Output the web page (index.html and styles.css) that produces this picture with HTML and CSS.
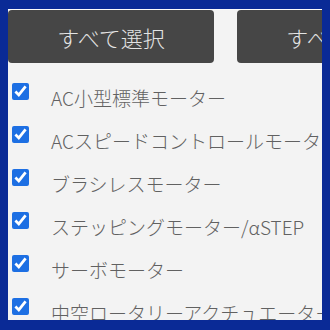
FILE: index.html
```html
<!DOCTYPE html>
<html lang="ja">
<head>
<meta charset="utf-8">
<link rel="stylesheet" href="styles.css">
</head>
<body>
<div class="frame">
  <div class="panel">
    <div class="buttons">
      <button class="btn">すべて選択</button>
      <button class="btn">すべて解除</button>
    </div>
    <ul class="list">
      <li class="row"><input type="checkbox" checked><span class="label">AC小型標準モーター</span></li>
      <li class="row"><input type="checkbox" checked><span class="label">ACスピードコントロールモーター</span></li>
      <li class="row"><input type="checkbox" checked><span class="label">ブラシレスモーター</span></li>
      <li class="row"><input type="checkbox" checked><span class="label">ステッピングモーター/αSTEP</span></li>
      <li class="row"><input type="checkbox" checked><span class="label">サーボモーター</span></li>
      <li class="row"><input type="checkbox" checked><span class="label">中空ロータリーアクチュエーター</span></li>
    </ul>
  </div>
</div>
</body>
</html>
```

FILE: styles.css
```css
html, body {
  margin: 0;
  padding: 0;
}
body {
  width: 330px;
  height: 330px;
  background: #0a2a96;
  font-family: "Noto Sans CJK JP", "Noto Sans", sans-serif;
}
.frame {
  padding: 9px 8px 10px 8px;
  height: 330px;
  box-sizing: border-box;
}
.panel {
  height: 100%;
  background: #f3f3f3;
  overflow: hidden;
  border-top: 1px solid #fbfbfb;
  box-sizing: border-box;
}
.buttons {
  display: flex;
  gap: 23px;
}
.btn {
  flex: 0 0 206px;
  height: 53px;
  border: none;
  border-radius: 4px;
  background: #464646;
  color: #e4e4e4;
  font-family: "Noto Sans CJK JP", sans-serif;
  font-size: 22px;
  font-weight: 300;
  padding: 0;
  white-space: nowrap;
  overflow: hidden;
}
.list {
  list-style: none;
  margin: 7px 0 0 0;
  padding: 0;
}
.row {
  display: flex;
  align-items: center;
  height: 43px;
  white-space: nowrap;
}
.row input {
  width: 17px;
  height: 17px;
  margin: 0 0 0 4px;
  accent-color: #1d6fe3;
  flex-shrink: 0;
}
.label {
  margin-left: 22px;
  padding-top: 11px;
  font-size: 19px;
  font-weight: 300;
  color: #616161;
  line-height: 1;
}
```
